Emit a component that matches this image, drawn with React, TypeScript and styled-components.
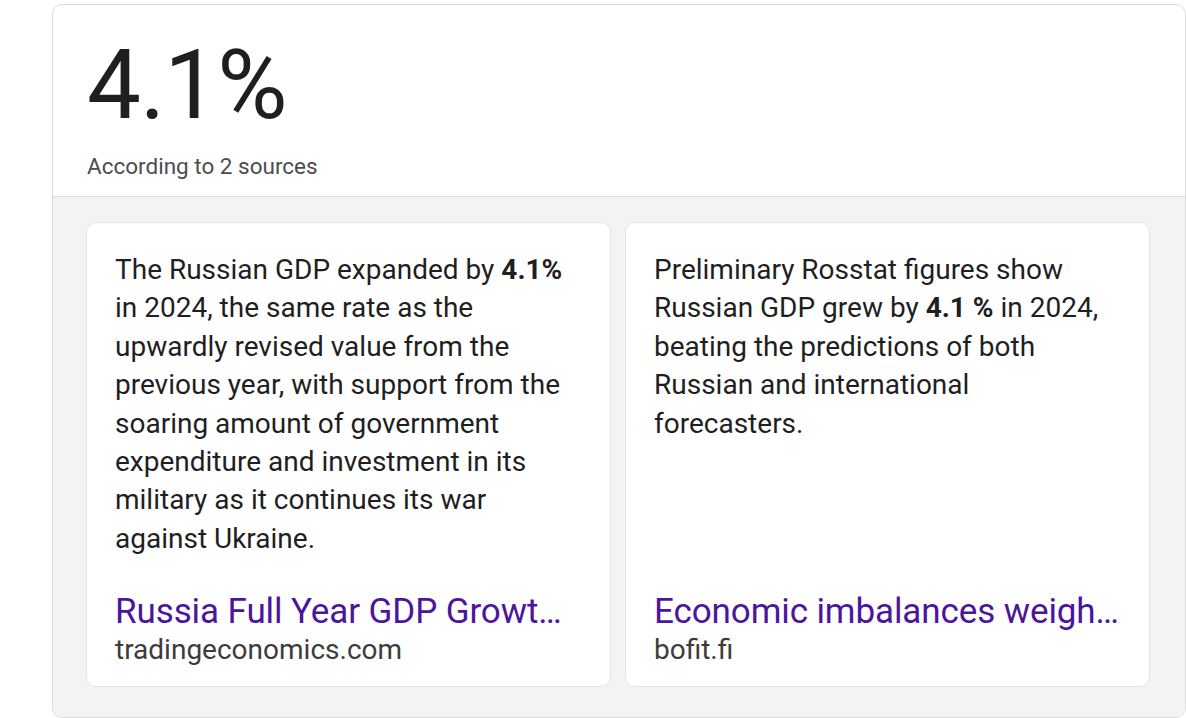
import React from 'react';
import styled, { createGlobalStyle } from 'styled-components';

const GlobalStyle = createGlobalStyle`
  html, body {
    margin: 0;
    padding: 0;
    background: #ffffff;
    font-family: Roboto, "Liberation Sans", Arial, sans-serif;
  }
`;

const Page = styled.div`
  padding: 4px 0 0 52px;
  height: 718px;
  box-sizing: border-box;
  overflow: hidden;
`;

const Panel = styled.section`
  width: 1134px;
  border: 1px solid #dadce0;
  border-radius: 10px;
  overflow: hidden;
  box-sizing: border-box;
`;

const Header = styled.header`
  height: 192px;
  padding: 20px 0 0 34px;
  box-sizing: border-box;
  border-bottom: 1px solid #dadce0;
`;

const BigValue = styled.div`
  font-size: 96px;
  line-height: 120px;
  color: #1f1f1f;
  letter-spacing: -1px;
`;

const Caption = styled.div`
  margin-top: 6px;
  font-size: 22.5px;
  line-height: 30px;
  color: #4d4d4d;
`;

const Sources = styled.div`
  display: grid;
  grid-template-columns: minmax(0, 1fr) minmax(0, 1fr);
  gap: 14px;
  padding: 25px 35px 30px 33px;
  background: #f3f3f3;
`;

const Card = styled.article`
  display: flex;
  flex-direction: column;
  height: 465px;
  padding: 28px 27px 18px 28px;
  box-sizing: border-box;
  background: #ffffff;
  border: 1px solid #e4e4e4;
  border-radius: 10px;
`;

const Snippet = styled.p`
  margin: 0;
  font-size: 28px;
  line-height: 38.4px;
  color: #1f1f1f;

  b {
    font-weight: 700;
  }
`;

const Footer = styled.div`
  margin-top: auto;
`;

const Title = styled.a`
  display: block;
  max-width: 465px;
  font-size: 35px;
  line-height: 40px;
  letter-spacing: -0.1px;
  color: #4b159c;
  text-decoration: none;
  white-space: nowrap;
  overflow: hidden;
  text-overflow: ellipsis;
`;

const Domain = styled.div`
  font-size: 28px;
  line-height: 36px;
  color: #3c3c3c;
`;

type Source = {
  before: string;
  bold: string;
  after: string;
  title: string;
  domain: string;
};

const sources: Source[] = [
  {
    before: 'The Russian GDP expanded by ',
    bold: '4.1%',
    after:
      ' in 2024, the same rate as the upwardly revised value from the previous year, with support from the soaring amount of government expenditure and investment in its military as it continues its war against Ukraine.',
    title: 'Russia Full Year GDP Growth 2024',
    domain: 'tradingeconomics.com',
  },
  {
    before: 'Preliminary Rosstat figures show Russian GDP grew by ',
    bold: '4.1 %',
    after: ' in 2024, beating the predictions of both Russian and international forecasters.',
    title: 'Economic imbalances weigh on Russian growth',
    domain: 'bofit.fi',
  },
];

export default function App() {
  return (
    <>
      <GlobalStyle />
      <Page>
        <Panel>
          <Header>
            <BigValue>4.1%</BigValue>
            <Caption>According to 2 sources</Caption>
          </Header>
          <Sources>
            {sources.map((s) => (
              <Card key={s.domain}>
                <Snippet>
                  {s.before}
                  <b>{s.bold}</b>
                  {s.after}
                </Snippet>
                <Footer>
                  <Title href="#">{s.title}</Title>
                  <Domain>{s.domain}</Domain>
                </Footer>
              </Card>
            ))}
          </Sources>
        </Panel>
      </Page>
    </>
  );
}
